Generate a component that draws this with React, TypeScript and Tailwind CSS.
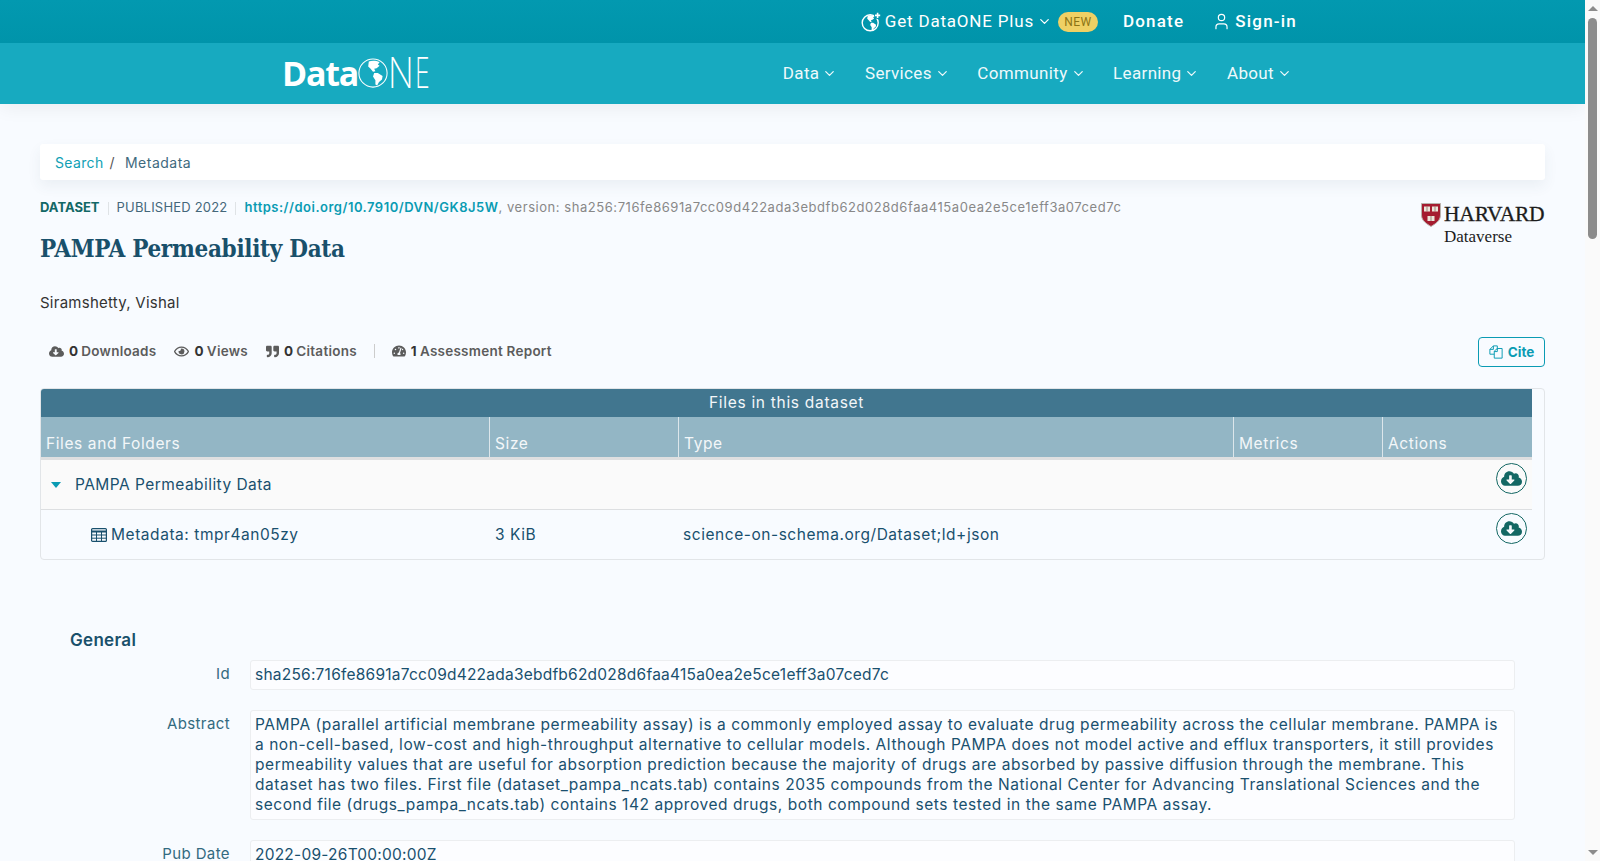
import { ChevronDown, User } from "lucide-react";
import { FaCloudDownloadAlt, FaRegEye, FaQuoteRight, FaTachometerAlt } from "react-icons/fa";

const body = "font-['Inter','Liberation_Sans',sans-serif]";
const plex = "font-['Roboto','Liberation_Sans',sans-serif]";
const slab = "font-['DejaVu_Serif_Condensed','DejaVu_Serif',serif]";

const navItems = ["Data", "Services", "Community", "Learning", "About"];

const columns = [
  { label: "Files and Folders", w: "w-[448px]" },
  { label: "Size", w: "w-[189px]" },
  { label: "Type", w: "w-[555px]" },
  { label: "Metrics", w: "w-[149px]" },
  { label: "Actions", w: "w-[150px]" },
];

function Land() {
  return (
    <>
      <path d="M36 12 C45 8 60 8 72 14 L66 22 L72 26 L62 34 L54 36 L58 44 L50 46 L42 36 L34 28 Z" />
      <path d="M54 50 L66 50 L82 60 L80 72 L70 80 L64 92 L58 88 L58 74 L50 62 Z" />
    </>
  );
}

function GlobePlus() {
  return (
    <svg viewBox="0 0 100 100" className="w-[20px] h-[20px] shrink-0" fill="white">
      <circle cx="46" cy="54" r="40" fill="none" stroke="white" strokeWidth="7" />
      <g transform="translate(0 8) scale(0.92)">
        <Land />
      </g>
      <rect x="66" y="0" width="34" height="34" fill="#0297ae" />
      <path d="M83 4 V30 M70 17 H96" stroke="white" strokeWidth="8" />
    </svg>
  );
}

function CopyIcon() {
  return (
    <svg viewBox="0 0 16 16" className="w-[14px] h-[14px] shrink-0" fill="none" stroke="currentColor" strokeWidth="1.1">
      <path d="M6 10.5 H1 V5 L5 1 H9.5 V5" />
      <path d="M5 1 V5 H1" />
      <path d="M6 15 V7 L9.5 4 H15 V15 Z" />
      <path d="M9.5 4 V7.5 H6" />
    </svg>
  );
}

function TableIcon() {
  return (
    <svg viewBox="0 0 16 14" className="ml-[50px] w-[16px] h-[14px] shrink-0" fill="none" stroke="currentColor">
      <rect x="0.6" y="0.6" width="14.8" height="12.8" rx="1" strokeWidth="1.2" />
      <path d="M0.6 3.5 H15.4" strokeWidth="2" />
      <path d="M0.6 7 H15.4 M0.6 10.2 H15.4 M5.5 3.5 V13.4 M10.5 3.5 V13.4" strokeWidth="1" />
    </svg>
  );
}

function Logo() {
  return (
    <div className="flex items-center h-[34px] ml-[282px] -mt-[2px] text-white">
      <span className="font-['Open_Sans',sans-serif] font-bold text-[34px] tracking-[-1.2px] leading-none">Data</span>
      <svg viewBox="0 0 100 100" className="w-[30px] h-[30px] shrink-0" fill="white">
        <circle cx="50" cy="50" r="47" fill="none" stroke="white" strokeWidth="3.5" />
        <Land />
      </svg>
      <span className="w-[27px] font-extralight text-[42px] leading-none scale-x-[0.8] origin-left">N</span>
      <span className="w-[14px] font-extralight text-[42px] leading-none scale-x-[0.6] origin-left">E</span>
    </div>
  );
}

function Harvard() {
  return (
    <div className="flex flex-col items-start w-[124px] font-['Liberation_Serif',serif] text-[#1c1c1c]">
      <div className="flex items-center gap-[3px] h-[24px]">
        <svg viewBox="0 0 20 24" className="w-[20px] h-[24px] shrink-0">
          <path d="M0.5 0.5 H19.5 V12 C19.5 18 14 21 10 23.5 C6 21 0.5 18 0.5 12 Z" fill="#a51c30" stroke="#b9b3ad" />
          <rect x="3" y="3.5" width="6" height="5" fill="#ece6da" />
          <rect x="11" y="3.5" width="6" height="5" fill="#ece6da" />
          <rect x="6.5" y="13" width="7" height="5" fill="#ece6da" />
          <path d="M6 3.5 V8.5 M14 3.5 V8.5 M10 13 V18" stroke="#7c5a55" strokeWidth="0.7" />
        </svg>
        <span className="text-[21.5px] leading-none whitespace-nowrap tracking-[-0.2px] [-webkit-text-stroke:0.3px_#1c1c1c]">HARVARD</span>
      </div>
      <span className="ml-[23px] text-[17px] leading-[20px]">Dataverse</span>
    </div>
  );
}

function DownloadButton() {
  return (
    <button className="w-[31px] h-[31px] rounded-full border border-[#136763] flex items-center justify-center text-[#136763]">
      <FaCloudDownloadAlt className="w-[21px] h-[21px]" />
    </button>
  );
}

function Stat({ icon, count, label }: { icon: React.ReactNode; count: string; label: string }) {
  return (
    <span className="flex items-center gap-[5px] text-[#5c5c5c] font-semibold text-[13.5px] tracking-[0.25px]">
      {icon}
      <span className="flex items-center gap-[3px]">
        <b className="text-[#333] font-bold">{count}</b>
        {label}
      </span>
    </span>
  );
}

function Field({ label, height, children }: { label: string; height: string; children: React.ReactNode }) {
  return (
    <div className="flex items-start">
      <div className="w-[160px] mr-[20px] pt-[4px] text-right text-[15px] leading-[20px] text-[#336a80] tracking-[0.4px]">{label}</div>
      <div className={`flex-1 ${height} bg-white/50 border border-[#eceef0] rounded-[3px] px-[4px] py-[4px] text-[15.5px] leading-[20px] text-[#19506e] whitespace-nowrap tracking-[0.23px]`}>
        {children}
      </div>
    </div>
  );
}

export default function App() {
  return (
    <div className={`flex h-[861px] overflow-hidden bg-[#f8fbff] ${body}`}>
      <div className="flex-1 min-w-0">
        <header className="shadow-[0_4px_18px_rgba(0,0,0,0.06)]">
          <div className="h-[43px] bg-gradient-to-b from-[#0299b0] to-[#0094aa] flex items-center justify-end pr-[288px] text-white text-[17px] tracking-[0.8px]">
            <div className={`flex items-center ${plex}`}>
              <GlobePlus />
              <span className="ml-[4px]">Get DataONE Plus</span>
              <ChevronDown className="w-[15px] h-[15px] ml-[3px]" strokeWidth={2} />
              <span className="ml-[6px] bg-[#efd064] text-[#8c7415] text-[12px] rounded-[10px] w-[40px] h-[20px] flex items-center justify-center tracking-[0.5px]">NEW</span>
              <span className="ml-[25px] font-medium tracking-[1.2px]">Donate</span>
              <User className="ml-[28px] w-[19px] h-[19px]" strokeWidth={1.5} />
              <span className="ml-[4px] font-medium tracking-[1.2px]">Sign-in</span>
            </div>
          </div>
          <div className="h-[61px] bg-[#17aac0] flex items-center justify-between pr-[293px]">
            <Logo />
            <nav className={`flex items-center gap-[27.5px] text-[#eef9fb] text-[17px] tracking-[0.35px] ${plex}`}>
              {navItems.map((item) => (
                <span key={item} className="flex items-center gap-[3px]">
                  {item}
                  <ChevronDown className="w-[15px] h-[15px]" strokeWidth={2} />
                </span>
              ))}
            </nav>
          </div>
        </header>

        <main className="px-[40px] pt-[40px]">
          <div className="h-[36px] bg-white rounded-[3px] shadow-[0_6px_14px_rgba(60,80,100,0.07)] flex items-center px-[15px] text-[14px] tracking-[0.35px]">
            <span className="text-[#109fb5]">Search</span>
            <span className="text-[#555] ml-[6px]">/</span>
            <span className="text-[#3f6a7e] ml-[10px] tracking-[0.5px]">Metadata</span>
          </div>

          <div className="flex justify-between items-start">
            <div>
              <div className="mt-[19px] h-[18px] flex items-center text-[13px] whitespace-nowrap">
                <b className="text-[#126866] font-bold">DATASET</b>
                <span className="w-px h-[13px] bg-[#dfe3e6] mx-[8px]" />
                <span className="text-[#44677a] tracking-[0.2px]">PUBLISHED 2022</span>
                <span className="w-px h-[13px] bg-[#dfe3e6] mx-[8px]" />
                <b className="text-[#0a9bb3] font-semibold tracking-[0.5px]">https://doi.org/10.7910/DVN/GK8J5W</b>
                <span className="text-[#888] tracking-[0.55px]">, version: sha256:716fe8691a7cc09d422ada3ebdfb62d028d6faa415a0ea2e5ce1eff3a07ced7c</span>
              </div>
              <h1 className={`mt-[16px] h-[32px] text-[24px] leading-[32px] font-bold tracking-[-0.3px] text-[#19506b] ${slab}`}>PAMPA Permeability Data</h1>
              <div className="mt-[28px] h-[20px] text-[15px] leading-[20px] text-[#333] tracking-[0.25px]">Siramshetty, Vishal</div>
            </div>
            <div className="mt-[23px]">
              <Harvard />
            </div>
          </div>

          <div className="mt-[23px] h-[30px] flex items-center justify-between">
            <div className="flex items-center pl-[9px]">
              <Stat icon={<FaCloudDownloadAlt className="w-[15px] h-[15px]" />} count="0" label="Downloads" />
              <span className="w-[18px]" />
              <Stat icon={<FaRegEye className="w-[15px] h-[15px]" />} count="0" label="Views" />
              <span className="w-[18px]" />
              <Stat icon={<FaQuoteRight className="w-[13px] h-[13px]" />} count="0" label="Citations" />
              <span className="w-px h-[14px] bg-[#ccc] ml-[17px] mr-[17px]" />
              <Stat icon={<FaTachometerAlt className="w-[14px] h-[14px]" />} count="1" label="Assessment Report" />
            </div>
            <button className="mt-[2px] w-[67px] h-[30px] border border-[#0a9bb3] rounded-[4px] text-[#0a9bb3] font-bold text-[13.5px] flex items-center justify-center gap-[5px]">
              <CopyIcon />
              Cite
            </button>
          </div>

          <div className="mt-[22px] h-[172px] border border-[#e2e5e8] rounded-[4px] overflow-hidden">
            <div className="w-[1491px]">
              <div className="h-[28px] bg-[#41768f] text-[#f3f7f9] text-[15.5px] flex items-center justify-center tracking-[0.7px]">
                Files in this dataset
              </div>
              <div className="h-[43px] bg-[#93b6c5] border-b-[3px] border-[#dedfe0] flex">
                {columns.map((col, i) => (
                  <div
                    key={col.label}
                    className={`${col.w} flex items-end pl-[5px] pb-[3px] text-[15.5px] leading-[20px] text-[#f3f7f9] tracking-[0.6px] ${i > 0 ? "border-l border-[#dce6eb]" : ""}`}
                  >
                    {col.label}
                  </div>
                ))}
              </div>
              <div className="h-[50px] bg-[#fafafa] border-b border-[#dddfe1] flex items-center text-[#19506e] text-[15.5px] tracking-[0.45px]">
                <span className="ml-[10px] w-0 h-0 border-l-[5px] border-r-[5px] border-t-[6px] border-l-transparent border-r-transparent border-t-[#0a9bb3]" />
                <span className="ml-[14px]">PAMPA Permeability Data</span>
                <span className="ml-auto mr-[5px] -mt-[12px]">
                  <DownloadButton />
                </span>
              </div>
              <div className="h-[49px] flex items-center text-[#19506e] text-[15.5px] tracking-[0.55px]">
                <TableIcon />
                <span className="ml-[4px] w-[383px]">Metadata: tmpr4an05zy</span>
                <span className="w-[189px] pl-[1px]">3 KiB</span>
                <span>science-on-schema.org/Dataset;ld+json</span>
                <span className="ml-auto mr-[5px] -mt-[12px]">
                  <DownloadButton />
                </span>
              </div>
            </div>
          </div>

          <section className="px-[30px]">
            <h2 className="mt-[68px] h-[24px] text-[17px] leading-[24px] font-semibold text-[#19506b] tracking-[0.3px]">General</h2>
            <div className="mt-[8px] flex flex-col gap-[20px]">
              <Field label="Id" height="h-[30px]">
                sha256:716fe8691a7cc09d422ada3ebdfb62d028d6faa415a0ea2e5ce1eff3a07ced7c
              </Field>
              <Field label="Abstract" height="h-[110px]">
                <span className="tracking-[0.55px]">
                  PAMPA (parallel artificial membrane permeability assay) is a commonly employed assay to evaluate drug permeability across the cellular membrane. PAMPA is
                  <br />
                  a non-cell-based, low-cost and high-throughput alternative to cellular models. Although PAMPA does not model active and efflux transporters, it still provides
                  <br />
                  permeability values that are useful for absorption prediction because the majority of drugs are absorbed by passive diffusion through the membrane. This
                  <br />
                  dataset has two files. First file (dataset_pampa_ncats.tab) contains 2035 compounds from the National Center for Advancing Translational Sciences and the
                  <br />
                  second file (drugs_pampa_ncats.tab) contains 142 approved drugs, both compound sets tested in the same PAMPA assay.
                </span>
              </Field>
              <Field label="Pub Date" height="h-[31px]">
                2022-09-26T00:00:00Z
              </Field>
            </div>
          </section>
        </main>
      </div>

      <aside className="w-[15px] shrink-0 bg-[#fafafa] flex flex-col items-center">
        <span className="mt-[6px] w-0 h-0 border-l-[5px] border-r-[5px] border-b-[5px] border-l-transparent border-r-transparent border-b-[#8c8c8c]" />
        <span className="mt-[7px] w-[9px] h-[221px] rounded-[5px] bg-[#8c8c8c]" />
        <span className="mt-auto mb-[6px] w-0 h-0 border-l-[5px] border-r-[5px] border-t-[5px] border-l-transparent border-r-transparent border-t-[#8c8c8c]" />
      </aside>
    </div>
  );
}
